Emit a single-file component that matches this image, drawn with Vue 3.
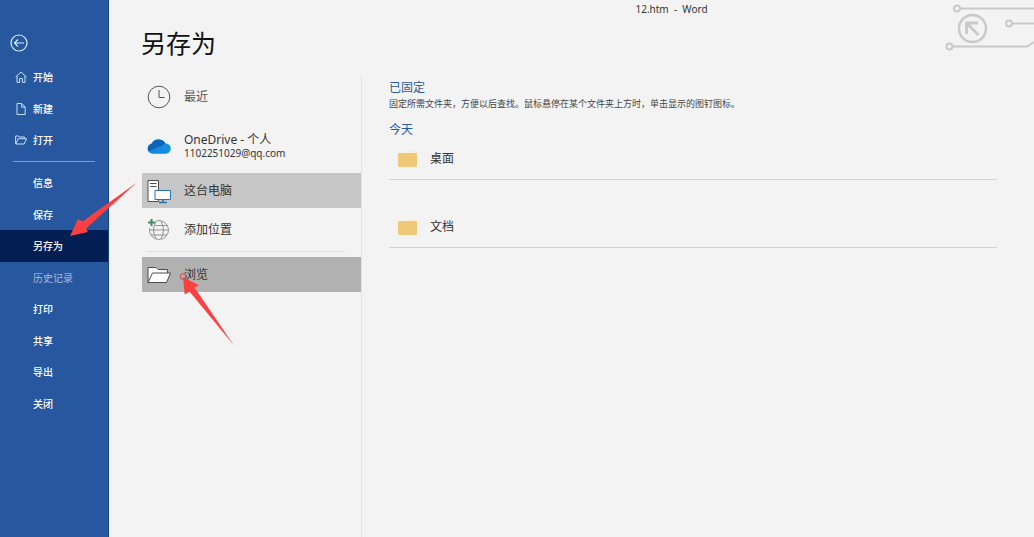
<script setup>
import { ref } from 'vue'

const topItems = [
  { label: '开始', icon: 'home' },
  { label: '新建', icon: 'page' },
  { label: '打开', icon: 'open' },
]
const items = [
  { label: '信息' },
  { label: '保存' },
  { label: '另存为' },
  { label: '历史记录', disabled: true },
  { label: '打印' },
  { label: '共享' },
  { label: '导出' },
  { label: '关闭' },
]
const active = ref('另存为')
const folders = ['桌面', '文档']
</script>

<template>
  <div class="backstage">
    <nav class="sidebar" aria-label="文件">
      <button class="back" type="button" aria-label="返回">
        <svg width="18" height="18" viewBox="0 0 18 18" fill="none" stroke="#d5edff" stroke-width="1.2">
          <circle cx="9" cy="9" r="8" />
          <path d="M14 9H4.5M8 5.5L4.5 9L8 12.5" />
        </svg>
      </button>
      <div class="group">
        <button v-for="item in topItems" :key="item.label" class="nav-item" type="button">
          <span class="nav-icon">
            <svg v-if="item.icon === 'home'" width="12" height="12" viewBox="0 0 12 12" fill="none" stroke="#c3e0fa">
              <path d="M.6 6L6 1L11.400 6M2 5V11.400H4.600V7.500H7.400V11.400H10V5" />
            </svg>
            <svg v-else-if="item.icon === 'page'" width="12" height="12" viewBox="0 0 12 12" fill="none" stroke="#c3e0fa">
              <path d="M2 .5H6.800L10.200 4V11.500H2ZM6.700 .8V4.200H10" />
            </svg>
            <svg v-else width="12" height="12" viewBox="0 0 12 12" fill="none" stroke="#c3e0fa">
              <path d="M.6 10V2H3.500L4.500 3H9.400V4.600M.8 10L3.200 4.700H11.500L9.200 10Z" />
            </svg>
          </span>
          {{ item.label }}
        </button>
      </div>
      <hr class="nav-rule" />
      <div class="group">
        <button
          v-for="item in items"
          :key="item.label"
          class="nav-item"
          :class="{ active: item.label === active }"
          :disabled="item.disabled"
          type="button"
          @click="active = item.label"
        >
          <span class="nav-icon"></span>
          {{ item.label }}
        </button>
      </div>
    </nav>

    <div class="content">
      <header class="titlebar">12.htm&nbsp; -&nbsp; Word</header>
      <svg class="circuit" width="90" height="54" viewBox="0 0 90 54" fill="none" stroke="#c9c9c9" stroke-width="2">
        <circle cx="13" cy="8.500" r="3" />
        <path d="M16 8.500H90" />
        <circle cx="65" cy="23.500" r="3" />
        <path d="M68 23.500H90" />
        <circle cx="5.500" cy="46.500" r="3" />
        <path d="M8.500 46.500H83L90 42" />
        <circle cx="28.500" cy="28.500" r="13.500" stroke-width="2.500" />
        <path d="M34.500 35L23 23.500M22.500 34V23H34" stroke-width="2.800" />
      </svg>

      <h1>另存为</h1>

      <div class="columns">
        <section class="places" aria-label="位置">
          <button class="place recent" type="button">
            <svg width="26" height="26" viewBox="0 0 26 26" fill="none" stroke="#555">
              <circle cx="13" cy="13" r="10.800" />
              <path d="M13 6V13.500H18.500" />
            </svg>
            <span>最近</span>
          </button>
          <button class="place drive" type="button">
            <svg width="26" height="26" viewBox="0 0 26 26">
              <path d="M6.500 20.500A5 5 0 0 1 5.500 10.800A8 8 0 0 1 19.500 10.500A5 5 0 0 1 20 20.500Z" fill="#1490df" />
              <path d="M5.500 10.800A8 8 0 0 1 19.500 10.500L9 17L2.500 18.500A5 5 0 0 1 5.500 10.800Z" fill="#0f64b5" />
              <path d="M2.700 18.700L13 13.500L23.500 18.500Q22.300 20.500 20 20.500H6.500Q4 20.500 2.700 18.700Z" fill="#1688e0" />
            </svg>
            <span>OneDrive - 个人<small>1102251029@qq.com</small></span>
          </button>
          <button class="place selected" type="button">
            <svg width="26" height="26" viewBox="0 0 26 26" fill="#fff">
              <path d="M2 2.500H12.500V23.500H2Z" stroke="#505050" />
              <path d="M4 5.500H10.500M4 8.500H10.500" stroke="#505050" />
              <path d="M9 12.500H24.500V21.500H9Z" stroke="#2872ad" />
              <path d="M17 21.500V24.500M13 24.500H21" stroke="#2872ad" stroke-width="1.500" />
            </svg>
            <span>这台电脑</span>
          </button>
          <button class="place add" type="button">
            <svg width="26" height="26" viewBox="0 0 26 26" fill="none" stroke="#888" stroke-width=".9">
              <path d="M10 4A9.500 9.500 0 1 1 3.700 11" />
              <path d="M3.500 13H22.500M5 18H21M9 8.500H21M10 4.500Q5 13 10 21.500M15 4.500Q20 13 15 21.500" />
              <path d="M5.500 2V9M2 5.500H9" stroke="#438767" stroke-width="2" />
            </svg>
            <span>添加位置</span>
          </button>
          <hr class="place-rule" />
          <button class="place browse" type="button">
            <svg width="26" height="26" viewBox="0 0 26 26" fill="#fff" stroke="#4d4d4d">
              <path d="M2 20.500V5.500H10L12 7.500H21.500V11" />
              <path d="M2 20.500L6.500 11H24.500L20.500 20.500Z" />
            </svg>
            <span>浏览</span>
          </button>
        </section>

        <section class="folders">
          <h2>已固定</h2>
          <p>固定所需文件夹，方便以后查找。鼠标悬停在某个文件夹上方时，单击显示的图钉图标。</p>
          <h2>今天</h2>
          <ul>
            <li v-for="name in folders" :key="name">
              <button class="folder" type="button">
                <svg width="20" height="18" viewBox="0 0 20 18">
                  <path d="M10 2.500L11.500 1H18Q19 1 19 2V5H10Z" fill="#faf0cf" />
                  <rect y="3" width="19" height="14" rx="1" fill="#efc878" />
                </svg>
                {{ name }}
              </button>
            </li>
          </ul>
        </section>
      </div>
    </div>

    <svg class="arrows" width="240" height="350" viewBox="0 0 240 350" fill="#fc4040" aria-hidden="true">
      <path d="M70 236L78 219L82.500 221.500L137 182.500L86 228.500L88 232Z" />
      <path d="M183 277L199 285.300L194.500 287.500L234 345.500L189.500 291.500L184.700 294.500Z" />
      <circle cx="183" cy="276.500" r="2.800" fill="none" stroke="#e63c3c" />
    </svg>
  </div>
</template>

<style>
body {
  margin: 0;
}
</style>

<style scoped>
.backstage {
  position: relative;
  display: flex;
  min-height: 100vh;
  background: #f3f3f3;
  color: #333;
  font-family: "Noto Sans", "Noto Sans CJK SC", sans-serif;
  font-size: 12px;
  line-height: 16px;
}
button {
  margin: 0;
  padding: 0;
  border: 0;
  background: none;
  color: inherit;
  font: inherit;
  text-align: left;
  cursor: pointer;
}
svg {
  display: block;
  flex: none;
}
hr {
  border: 0;
}
.sidebar {
  flex: none;
  box-sizing: border-box;
  width: 109px;
  padding-top: 34px;
  background: #27589f;
  border-right: 1px solid #164283;
}
.back {
  display: block;
  margin: 0 0 9px 10px;
}
.group {
  display: flex;
  flex-direction: column;
}
.nav-item {
  display: flex;
  align-items: center;
  gap: 6px;
  height: 32px;
  padding-left: 15px;
  color: #fff;
  font-size: 10px;
  font-weight: 500;
}
.nav-item:nth-child(even) {
  height: 31px;
}
.nav-icon {
  width: 12px;
}
.nav-item.active {
  background: #021e52;
}
.nav-item:disabled {
  color: #93abcf;
}
.nav-rule {
  height: 1px;
  margin: 5px 13px;
  background: #7d9bc8;
}
.content {
  flex: 1;
  min-width: 0;
  display: flex;
  flex-direction: column;
  position: relative;
}
.titlebar {
  padding: 1px 0 0 200px;
  text-align: center;
  font-size: 10px;
}
.circuit {
  position: absolute;
  top: 0;
  right: 0;
}
h1 {
  margin: 8px 0 15px 32px;
  color: #111;
  font-size: 25px;
  line-height: 36px;
  font-weight: 400;
}
.columns {
  flex: 1;
  display: flex;
}
.places {
  flex: none;
  box-sizing: border-box;
  width: 253px;
  padding: 3px 0 0 33px;
  border-right: 1px solid #e2e2e2;
  display: flex;
  flex-direction: column;
}
.place {
  display: flex;
  align-items: center;
  gap: 12px;
  height: 35px;
  padding-left: 4px;
}
.recent {
  margin-bottom: 14px;
  color: #555;
}
.drive {
  margin-bottom: 10px;
}
.drive span {
  line-height: 14px;
}
.drive small {
  display: block;
  font-size: 10px;
  line-height: 12px;
}
.selected {
  margin-bottom: 4px;
  background: #c6c6c6;
}
.browse {
  background: #b1b1b1;
}
.place-rule {
  height: 1px;
  margin: 4px 16px 5px 5px;
  background: #dfdfdf;
}
.folders {
  flex: 1;
  min-width: 0;
  padding: 4px 37px 0 27px;
}
h2 {
  margin: 0;
  color: #2b5a9e;
  font-size: 12px;
  font-weight: 400;
}
p {
  margin: 0 0 10px;
  color: #444;
  font-size: 9px;
}
ul {
  margin: 0;
  padding: 0;
  list-style: none;
}
li {
  display: flex;
  border-bottom: 1px solid #d2d2d2;
}
li + li {
  margin-top: 26px;
}
.folder {
  flex: 1;
  display: flex;
  align-items: center;
  gap: 12px;
  height: 41px;
  padding-left: 9px;
}
.arrows {
  position: absolute;
  top: 0;
  left: 0;
  pointer-events: none;
}
</style>
